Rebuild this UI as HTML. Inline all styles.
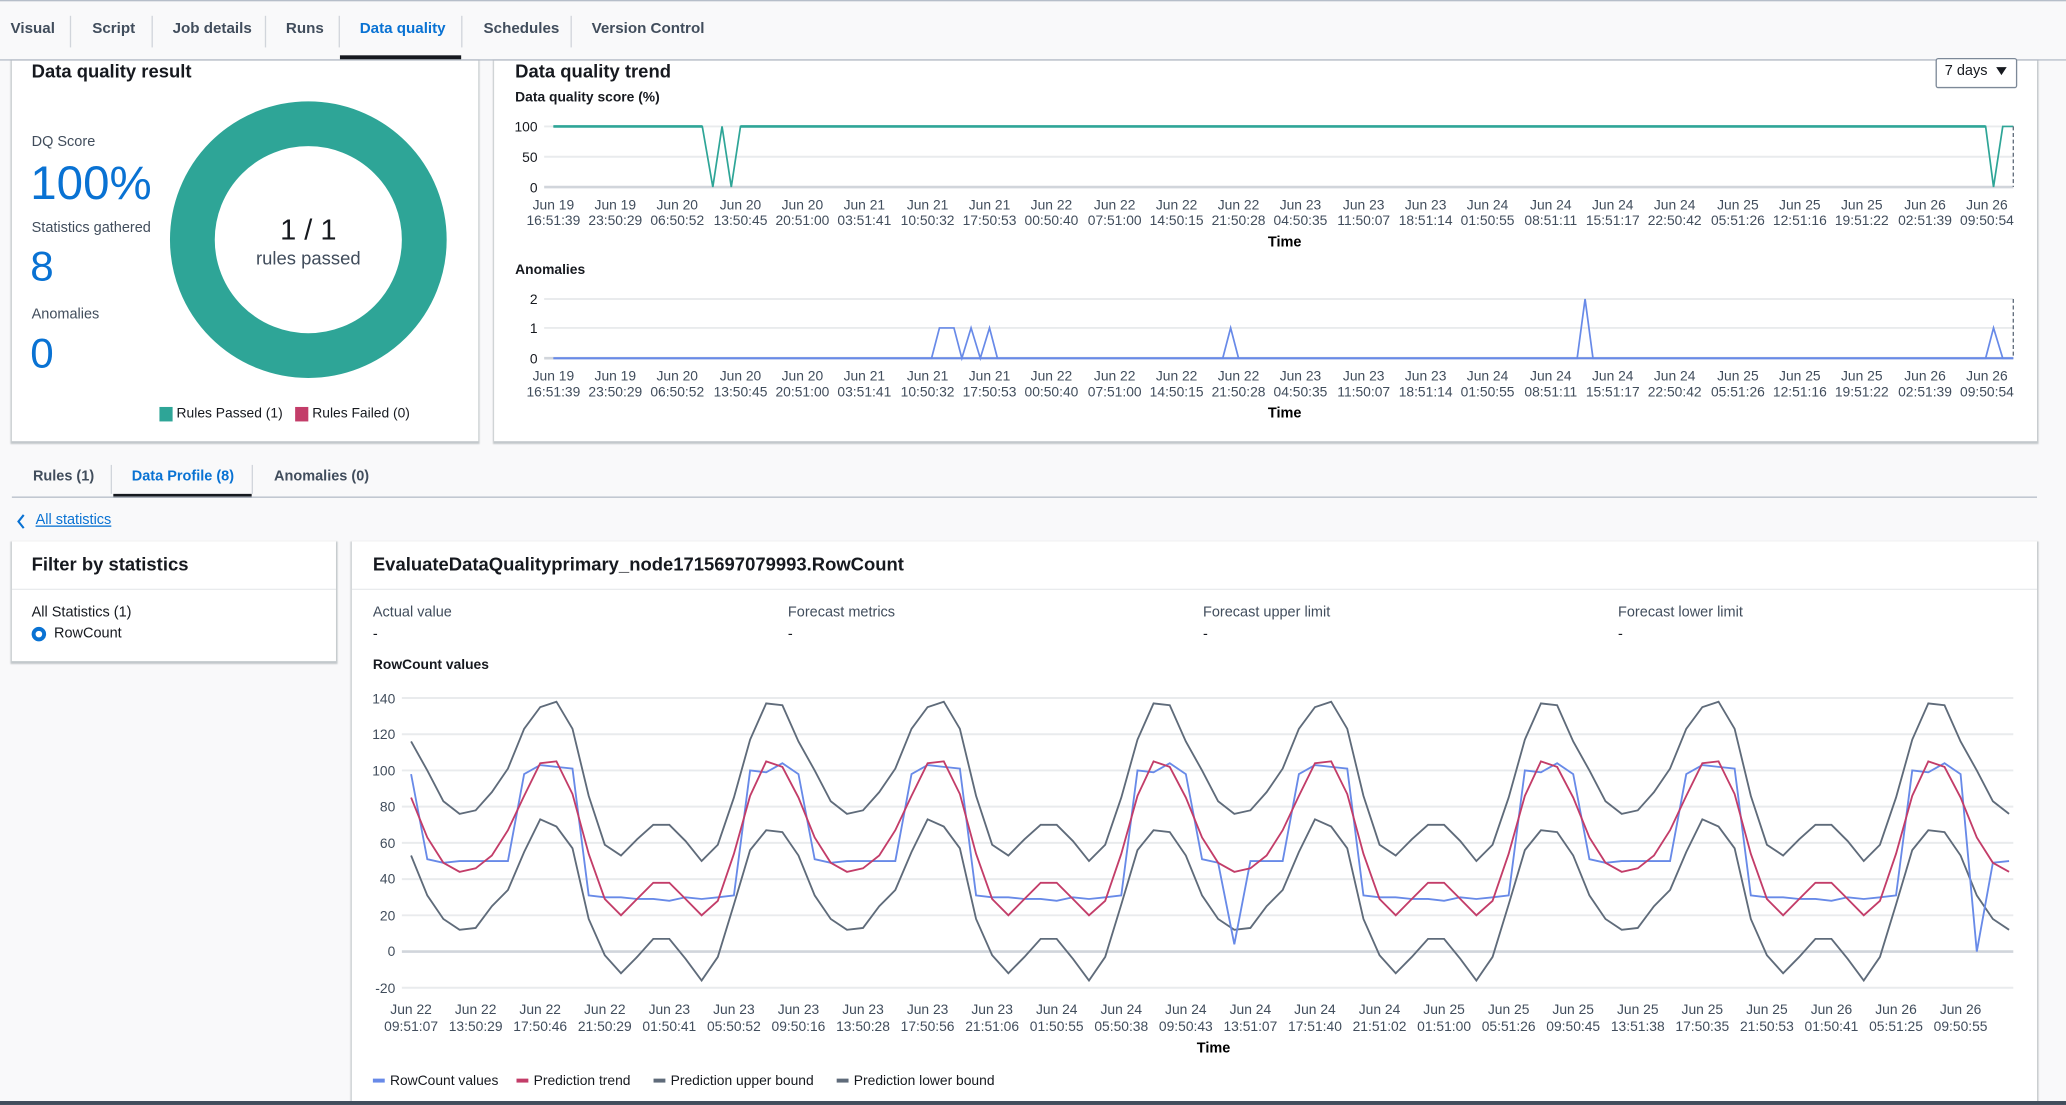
<!DOCTYPE html>
<html><head><meta charset="utf-8">
<style>
html,body{margin:0;padding:0;width:2066px;height:1105px;overflow:hidden;background:#f9f9fa;}
#w{position:absolute;left:0;top:0;width:1568px;height:839px;overflow:hidden;transform:scale(1.3176,1.317);transform-origin:0 0;font-family:"Liberation Sans",sans-serif;color:#16191f;}
.a{position:absolute;white-space:nowrap;}
.card{position:absolute;background:#fff;box-shadow:0 1px 1px 1px rgba(0,28,36,.22);}
.b{font-weight:bold;}
</style></head><body>
<div id="w">
<!-- top tab bar -->
<div class="a" style="left:0;top:0;width:1568px;height:1px;background:#b6bec9"></div>
<div class="a" style="left:0;top:45px;width:1568px;height:1px;background:#b6bec9"></div>
<div class="a b" style="left:8px;top:16px;font-size:11.5px;color:#414d5c">Visual</div>
<div class="a" style="left:53px;top:12px;width:1px;height:24px;background:#d1d5db"></div>
<div class="a b" style="left:70px;top:16px;font-size:11.5px;color:#414d5c">Script</div>
<div class="a" style="left:115px;top:12px;width:1px;height:24px;background:#d1d5db"></div>
<div class="a b" style="left:131px;top:16px;font-size:11.5px;color:#414d5c">Job details</div>
<div class="a" style="left:201px;top:12px;width:1px;height:24px;background:#d1d5db"></div>
<div class="a b" style="left:217px;top:16px;font-size:11.5px;color:#414d5c">Runs</div>
<div class="a" style="left:257px;top:12px;width:1px;height:24px;background:#d1d5db"></div>
<div class="a b" style="left:273px;top:16px;font-size:11.5px;color:#0972d3">Data quality</div>
<div class="a" style="left:258px;top:42px;width:92px;height:3px;background:#16191f"></div>
<div class="a" style="left:350px;top:12px;width:1px;height:24px;background:#d1d5db"></div>
<div class="a b" style="left:367px;top:16px;font-size:11.5px;color:#414d5c">Schedules</div>
<div class="a" style="left:433px;top:12px;width:1px;height:24px;background:#d1d5db"></div>
<div class="a b" style="left:449px;top:16px;font-size:11.5px;color:#414d5c">Version Control</div>

<!-- cards -->
<div class="card" style="left:9px;top:46px;width:354px;height:289px"></div>
<div class="card" style="left:375px;top:46px;width:1171px;height:289px"></div>
<div class="a b" style="left:24px;top:46px;font-size:14px">Data quality result</div>
<div class="a" style="left:24px;top:102px;font-size:11px;color:#414d5c">DQ Score</div>
<div class="a" style="left:23px;top:118px;font-size:36px;color:#0972d3">100%</div>
<div class="a" style="left:24px;top:167px;font-size:11px;color:#414d5c">Statistics gathered</div>
<div class="a" style="left:23px;top:184px;font-size:32px;color:#0972d3">8</div>
<div class="a" style="left:24px;top:233px;font-size:11px;color:#414d5c">Anomalies</div>
<div class="a" style="left:23px;top:250px;font-size:32px;color:#0972d3">0</div>
<div class="a" style="left:121px;top:309px;width:10px;height:11px;background:#2ea597"></div>
<div class="a" style="left:134px;top:308px;font-size:10.5px;color:#16191f">Rules Passed (1)</div>
<div class="a" style="left:224px;top:309px;width:10px;height:11px;background:#c33d69"></div>
<div class="a" style="left:237px;top:308px;font-size:10.5px;color:#16191f">Rules Failed (0)</div>

<div class="a b" style="left:391px;top:46px;font-size:14px">Data quality trend</div>
<div class="a" style="left:1469px;top:44px;width:60px;height:21px;border:1px solid #7d8998;border-radius:2px;background:#fff"></div>
<div class="a" style="left:1476px;top:48px;font-size:11px">7 days</div>
<div class="a b" style="left:391px;top:68px;font-size:10.5px">Data quality score (%)</div>
<div class="a b" style="left:391px;top:199px;font-size:10.5px">Anomalies</div>

<!-- inner tabs -->
<div class="a b" style="left:25px;top:356px;font-size:11px;color:#414d5c">Rules (1)</div>
<div class="a" style="left:84px;top:353px;width:1px;height:22px;background:#d1d5db"></div>
<div class="a b" style="left:100px;top:356px;font-size:11px;color:#0972d3">Data Profile (8)</div>
<div class="a" style="left:86px;top:375px;width:105px;height:3px;background:#16191f"></div>
<div class="a" style="left:191px;top:353px;width:1px;height:22px;background:#d1d5db"></div>
<div class="a b" style="left:208px;top:356px;font-size:11px;color:#414d5c">Anomalies (0)</div>
<div class="a" style="left:9px;top:377px;width:1537px;height:1px;background:#b6bec9"></div>
<div class="a" style="left:27px;top:389px;font-size:11px;color:#0972d3;text-decoration:underline">All statistics</div>

<div class="card" style="left:9px;top:411px;width:246px;height:91px"></div>
<div class="a" style="left:9px;top:447px;width:246px;height:1px;background:#e9ebed"></div>
<div class="a b" style="left:24px;top:420px;font-size:14px">Filter by statistics</div>
<div class="a" style="left:24px;top:459px;font-size:11px">All Statistics (1)</div>
<div class="a" style="left:24px;top:476px;width:5px;height:5px;border:3px solid #0972d3;border-radius:50%"></div>
<div class="a" style="left:41px;top:475px;font-size:11px">RowCount</div>

<div class="card" style="left:267px;top:411px;width:1279px;height:425px"></div>
<div class="a" style="left:267px;top:447px;width:1279px;height:1px;background:#e9ebed"></div>
<div class="a b" style="left:283px;top:420px;font-size:14px">EvaluateDataQualityprimary_node1715697079993.RowCount</div>
<div class="a" style="left:283px;top:459px;font-size:11px;color:#414d5c">Actual value</div>
<div class="a" style="left:598px;top:459px;font-size:11px;color:#414d5c">Forecast metrics</div>
<div class="a" style="left:913px;top:459px;font-size:11px;color:#414d5c">Forecast upper limit</div>
<div class="a" style="left:1228px;top:459px;font-size:11px;color:#414d5c">Forecast lower limit</div>
<div class="a" style="left:283px;top:476px;font-size:11px">-</div>
<div class="a" style="left:598px;top:476px;font-size:11px">-</div>
<div class="a" style="left:913px;top:476px;font-size:11px">-</div>
<div class="a" style="left:1228px;top:476px;font-size:11px">-</div>
<div class="a b" style="left:283px;top:499px;font-size:10.5px">RowCount values</div>
<div class="a" style="left:0;top:836px;width:1568px;height:3px;background:#414d5c"></div>

<svg class="a" style="left:0;top:0" width="1568" height="839" font-family="Liberation Sans, sans-serif">
<path d="M18 391 L14 396 L18 401" fill="none" stroke="#0972d3" stroke-width="1.6"/>
<path d="M1515 51 L1523 51 L1519 57 Z" fill="#16191f"/>
<circle cx="234" cy="182" r="88" fill="none" stroke="#2ea597" stroke-width="34"/>
<text x="234" y="182" text-anchor="middle" font-size="22" fill="#16191f">1 / 1</text>
<text x="234" y="201" text-anchor="middle" font-size="14" fill="#414d5c">rules passed</text>

<g stroke="#e9ebed" stroke-width="1.5"><line x1="413" y1="96" x2="1528" y2="96"/><line x1="413" y1="119" x2="1528" y2="119"/></g>
<line x1="413" y1="142" x2="1528" y2="142" stroke="#d1d5db" stroke-width="2"/>
<g font-size="10.5" fill="#16191f" text-anchor="end"><text x="408" y="100">100</text><text x="408" y="123">50</text><text x="408" y="146">0</text>
<text x="408" y="231">2</text><text x="408" y="253">1</text><text x="408" y="276">0</text></g>
<polyline points="420,96 533,96 541,142 548,96 555,142 562,96 1507,96 1513,142 1520,96 1528,96" fill="none" stroke="#2ea597" stroke-width="1.3"/>
<line x1="420" y1="96" x2="533" y2="96" stroke="#2ea597" stroke-width="2"/><line x1="562" y1="96" x2="1507" y2="96" stroke="#2ea597" stroke-width="2"/>
<line x1="1528" y1="96" x2="1528" y2="142" stroke="#5f6b7a" stroke-dasharray="3,2"/>
<g stroke="#e9ebed" stroke-width="1.5"><line x1="413" y1="227" x2="1528" y2="227"/><line x1="413" y1="249" x2="1528" y2="249"/></g>
<line x1="413" y1="272" x2="1528" y2="272" stroke="#d1d5db" stroke-width="2"/>
<polyline points="420,272 707,272 713,249 724,249 730,272 737,249 744,272 751,249 757,272 928,272 934,249 940,272 1197,272 1203,227 1209,272 1507,272 1513,249 1520,272 1528,272" fill="none" stroke="#688ae8" stroke-width="1.3"/>
<line x1="420" y1="272" x2="1528" y2="272" stroke="#688ae8" stroke-width="1.5"/>
<line x1="1528" y1="227" x2="1528" y2="272" stroke="#5f6b7a" stroke-dasharray="3,2"/>
<g font-size="10.5" fill="#414d5c" text-anchor="middle">
<text x="420" y="159">Jun 19</text><text x="420" y="171">16:51:39</text>
<text x="467" y="159">Jun 19</text><text x="467" y="171">23:50:29</text>
<text x="514" y="159">Jun 20</text><text x="514" y="171">06:50:52</text>
<text x="562" y="159">Jun 20</text><text x="562" y="171">13:50:45</text>
<text x="609" y="159">Jun 20</text><text x="609" y="171">20:51:00</text>
<text x="656" y="159">Jun 21</text><text x="656" y="171">03:51:41</text>
<text x="704" y="159">Jun 21</text><text x="704" y="171">10:50:32</text>
<text x="751" y="159">Jun 21</text><text x="751" y="171">17:50:53</text>
<text x="798" y="159">Jun 22</text><text x="798" y="171">00:50:40</text>
<text x="846" y="159">Jun 22</text><text x="846" y="171">07:51:00</text>
<text x="893" y="159">Jun 22</text><text x="893" y="171">14:50:15</text>
<text x="940" y="159">Jun 22</text><text x="940" y="171">21:50:28</text>
<text x="987" y="159">Jun 23</text><text x="987" y="171">04:50:35</text>
<text x="1035" y="159">Jun 23</text><text x="1035" y="171">11:50:07</text>
<text x="1082" y="159">Jun 23</text><text x="1082" y="171">18:51:14</text>
<text x="1129" y="159">Jun 24</text><text x="1129" y="171">01:50:55</text>
<text x="1177" y="159">Jun 24</text><text x="1177" y="171">08:51:11</text>
<text x="1224" y="159">Jun 24</text><text x="1224" y="171">15:51:17</text>
<text x="1271" y="159">Jun 24</text><text x="1271" y="171">22:50:42</text>
<text x="1319" y="159">Jun 25</text><text x="1319" y="171">05:51:26</text>
<text x="1366" y="159">Jun 25</text><text x="1366" y="171">12:51:16</text>
<text x="1413" y="159">Jun 25</text><text x="1413" y="171">19:51:22</text>
<text x="1461" y="159">Jun 26</text><text x="1461" y="171">02:51:39</text>
<text x="1508" y="159">Jun 26</text><text x="1508" y="171">09:50:54</text>
</g>
<g font-size="10.5" fill="#414d5c" text-anchor="middle">
<text x="420" y="289">Jun 19</text><text x="420" y="301">16:51:39</text>
<text x="467" y="289">Jun 19</text><text x="467" y="301">23:50:29</text>
<text x="514" y="289">Jun 20</text><text x="514" y="301">06:50:52</text>
<text x="562" y="289">Jun 20</text><text x="562" y="301">13:50:45</text>
<text x="609" y="289">Jun 20</text><text x="609" y="301">20:51:00</text>
<text x="656" y="289">Jun 21</text><text x="656" y="301">03:51:41</text>
<text x="704" y="289">Jun 21</text><text x="704" y="301">10:50:32</text>
<text x="751" y="289">Jun 21</text><text x="751" y="301">17:50:53</text>
<text x="798" y="289">Jun 22</text><text x="798" y="301">00:50:40</text>
<text x="846" y="289">Jun 22</text><text x="846" y="301">07:51:00</text>
<text x="893" y="289">Jun 22</text><text x="893" y="301">14:50:15</text>
<text x="940" y="289">Jun 22</text><text x="940" y="301">21:50:28</text>
<text x="987" y="289">Jun 23</text><text x="987" y="301">04:50:35</text>
<text x="1035" y="289">Jun 23</text><text x="1035" y="301">11:50:07</text>
<text x="1082" y="289">Jun 23</text><text x="1082" y="301">18:51:14</text>
<text x="1129" y="289">Jun 24</text><text x="1129" y="301">01:50:55</text>
<text x="1177" y="289">Jun 24</text><text x="1177" y="301">08:51:11</text>
<text x="1224" y="289">Jun 24</text><text x="1224" y="301">15:51:17</text>
<text x="1271" y="289">Jun 24</text><text x="1271" y="301">22:50:42</text>
<text x="1319" y="289">Jun 25</text><text x="1319" y="301">05:51:26</text>
<text x="1366" y="289">Jun 25</text><text x="1366" y="301">12:51:16</text>
<text x="1413" y="289">Jun 25</text><text x="1413" y="301">19:51:22</text>
<text x="1461" y="289">Jun 26</text><text x="1461" y="301">02:51:39</text>
<text x="1508" y="289">Jun 26</text><text x="1508" y="301">09:50:54</text>
</g>
<text x="975" y="187" text-anchor="middle" font-size="11" font-weight="bold">Time</text>
<text x="975" y="317" text-anchor="middle" font-size="11" font-weight="bold">Time</text>

<g stroke="#e9ebed" stroke-width="1.5">
<line x1="305" y1="530" x2="1528" y2="530"/><line x1="305" y1="557.5" x2="1528" y2="557.5"/><line x1="305" y1="585" x2="1528" y2="585"/><line x1="305" y1="612.5" x2="1528" y2="612.5"/><line x1="305" y1="640" x2="1528" y2="640"/><line x1="305" y1="667.5" x2="1528" y2="667.5"/><line x1="305" y1="695" x2="1528" y2="695"/><line x1="305" y1="750" x2="1528" y2="750"/></g>
<line x1="305" y1="722.5" x2="1528" y2="722.5" stroke="#d1d5db" stroke-width="2"/>
<g font-size="10.5" fill="#414d5c" text-anchor="end">
<text x="300" y="534">140</text><text x="300" y="561">120</text><text x="300" y="589">100</text><text x="300" y="616">80</text><text x="300" y="644">60</text><text x="300" y="671">40</text><text x="300" y="699">20</text><text x="300" y="726">0</text><text x="300" y="754">-20</text></g>
<g id="series" fill="none" stroke-width="1.4"></g>
<g font-size="10.5" fill="#414d5c" text-anchor="middle">
<text x="312" y="770">Jun 22</text><text x="312" y="783">09:51:07</text>
<text x="361" y="770">Jun 22</text><text x="361" y="783">13:50:29</text>
<text x="410" y="770">Jun 22</text><text x="410" y="783">17:50:46</text>
<text x="459" y="770">Jun 22</text><text x="459" y="783">21:50:29</text>
<text x="508" y="770">Jun 23</text><text x="508" y="783">01:50:41</text>
<text x="557" y="770">Jun 23</text><text x="557" y="783">05:50:52</text>
<text x="606" y="770">Jun 23</text><text x="606" y="783">09:50:16</text>
<text x="655" y="770">Jun 23</text><text x="655" y="783">13:50:28</text>
<text x="704" y="770">Jun 23</text><text x="704" y="783">17:50:56</text>
<text x="753" y="770">Jun 23</text><text x="753" y="783">21:51:06</text>
<text x="802" y="770">Jun 24</text><text x="802" y="783">01:50:55</text>
<text x="851" y="770">Jun 24</text><text x="851" y="783">05:50:38</text>
<text x="900" y="770">Jun 24</text><text x="900" y="783">09:50:43</text>
<text x="949" y="770">Jun 24</text><text x="949" y="783">13:51:07</text>
<text x="998" y="770">Jun 24</text><text x="998" y="783">17:51:40</text>
<text x="1047" y="770">Jun 24</text><text x="1047" y="783">21:51:02</text>
<text x="1096" y="770">Jun 25</text><text x="1096" y="783">01:51:00</text>
<text x="1145" y="770">Jun 25</text><text x="1145" y="783">05:51:26</text>
<text x="1194" y="770">Jun 25</text><text x="1194" y="783">09:50:45</text>
<text x="1243" y="770">Jun 25</text><text x="1243" y="783">13:51:38</text>
<text x="1292" y="770">Jun 25</text><text x="1292" y="783">17:50:35</text>
<text x="1341" y="770">Jun 25</text><text x="1341" y="783">21:50:53</text>
<text x="1390" y="770">Jun 26</text><text x="1390" y="783">01:50:41</text>
<text x="1439" y="770">Jun 26</text><text x="1439" y="783">05:51:25</text>
<text x="1488" y="770">Jun 26</text><text x="1488" y="783">09:50:55</text>
</g>
<text x="921" y="799" text-anchor="middle" font-size="11" font-weight="bold">Time</text>
<g font-size="10.5" fill="#16191f">
<rect x="283" y="819" width="9" height="3" fill="#688ae8"/><text x="296" y="824">RowCount values</text>
<rect x="392" y="819" width="9" height="3" fill="#c33d69"/><text x="405" y="824">Prediction trend</text>
<rect x="496" y="819" width="9" height="3" fill="#5f6b7a"/><text x="509" y="824">Prediction upper bound</text>
<rect x="635" y="819" width="9" height="3" fill="#5f6b7a"/><text x="648" y="824">Prediction lower bound</text>
</g>
</svg>
</div>
<script>
(function(){
var U=[116,100,83,76,78,88,101,123,135,138,123,86,59,53,62,70,70,61,50,59,85,117,137,136];
var L=[53,31,18,12,13,25,34,55,73,69,57,18,-2,-12,-3,7,7,-4,-16,-3,26,56,67,66];
var T=[85,63,49,44,46,53,67,86,104,105,87,54,29,20,29,38,38,29,20,28,54,86,105,102];
var B=[98,51,49,50,50,50,50,98,103,102,101,31,30,30,29,29,28,30,29,30,31,100,99,104];
function pts(a,sp){var s=[];for(var i=0;i<100;i++){var v=a[i%24];if(sp&&sp[i]!==undefined)v=sp[i];s.push((312+12.25*i).toFixed(1)+','+(722.5-v*1.375).toFixed(1));}return s.join(' ');}
var g=document.getElementById('series');
var d=[[U,'#5f6b7a'],[L,'#5f6b7a'],[B,'#688ae8',{51:4,97:0}],[T,'#c33d69']];
var h='';d.forEach(function(x){h+='<polyline points="'+pts(x[0],x[2])+'" stroke="'+x[1]+'"/>';});
g.innerHTML=h;
})();
</script>
</body></html>
